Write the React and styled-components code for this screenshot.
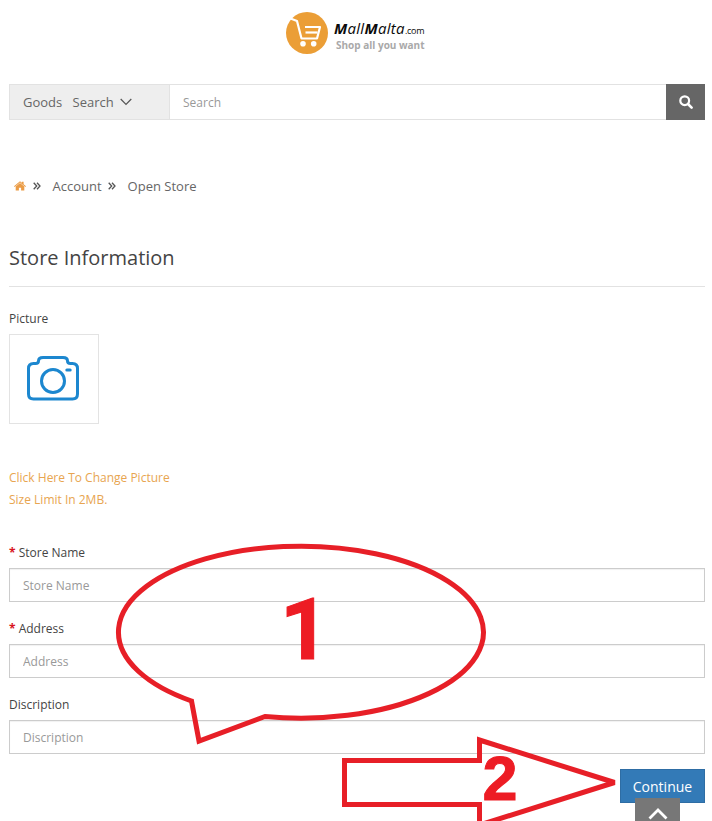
import React from 'react';
import styled, { createGlobalStyle } from 'styled-components';

const GlobalStyle = createGlobalStyle`
  *, *::before, *::after { box-sizing: border-box; }
  html, body { margin: 0; height: 100%; overflow: hidden; background: #fff; }
  body, input, button { font-family: "Open Sans", "Noto Sans", sans-serif; font-size: 13px; }
`;

const Page = styled.main`
  position: relative;
  width: 712px;
  height: 821px;
  overflow: hidden;
  padding: 12px 7px 0 9px;
  color: #444;
  background: #fff;
`;

const Brand = styled.header`
  display: flex;
  gap: 6px;
  height: 42px;
  padding-left: 277px;
`;

const BrandText = styled.div`
  padding-top: 7px;
`;

const BrandName = styled.div`
  display: flex;
  align-items: baseline;
  height: 19px;
  color: #0a0a0a;
  font-size: 15px;
  line-height: 18px;
  font-style: italic;
  letter-spacing: 0.3px;
  white-space: nowrap;

  b { font-weight: 700; }
`;

const BrandSuffix = styled.span`
  font-size: 9px;
  font-style: normal;
  letter-spacing: -0.25px;
`;

const Tagline = styled.div`
  padding-left: 2px;
  color: #a9a9a9;
  font-size: 10px;
  font-weight: 700;
  line-height: 15px;
  white-space: nowrap;
`;

const SearchBar = styled.form`
  display: flex;
  height: 36px;
  margin-top: 30px;
`;

const SearchScope = styled.button`
  display: flex;
  align-items: center;
  width: 161px;
  padding: 0 0 0 13px;
  border: 1px solid #e2e2e2;
  background: #eee;
  color: #666;
  font-size: 13px;
  word-spacing: 7px;

  svg { margin-left: 6px; }
`;

const SearchInput = styled.input`
  flex: 1;
  min-width: 0;
  padding: 0 13px;
  border: 1px solid #e2e2e2;
  border-width: 1px 0;
  outline: none;
  font-size: 12px;

  &::placeholder { color: #999; opacity: 1; }
`;

const SearchButton = styled.button`
  display: flex;
  align-items: center;
  justify-content: center;
  width: 39px;
  padding: 0;
  border: 0;
  background: #666;
`;

const Breadcrumb = styled.nav`
  display: flex;
  align-items: center;
  height: 20px;
  margin-top: 56px;
  padding-left: 5px;
  color: #666;
  font-size: 13px;

  svg { flex: none; }
`;

const Crumb = styled.span`
  margin: 0 6.5px 0 11.5px;
`;

const HomeLink = styled.a`
  display: flex;
  margin-right: 7px;
`;

const Title = styled.h1`
  height: 46px;
  margin: 45px 0 0;
  padding-top: 4px;
  border-bottom: 1px solid #e2e2e2;
  color: #444;
  font-size: 20px;
  font-weight: 400;
  line-height: 26px;
`;

const PictureLabel = styled.div`
  height: 18px;
  margin-top: 23px;
  font-size: 12px;
  line-height: 18px;
`;

const PictureBox = styled.div`
  display: flex;
  align-items: center;
  justify-content: center;
  width: 90px;
  height: 90px;
  margin-top: 6px;
  padding: 0 2px 2px 0;
  border: 1px solid #e3e3e3;
`;

const Hint = styled.p`
  height: 44px;
  margin: 43px 0 0;
  color: #e8a550;
  font-size: 12px;
  line-height: 22px;
`;

const Fields = styled.div`
  display: grid;
  grid-auto-rows: 76px;
  margin-top: 32px;
`;

const Field = styled.label`
  display: block;
`;

const FieldLabel = styled.span`
  display: block;
  height: 25px;
  font-size: 12px;
  line-height: 19px;
`;

const Required = styled.span`
  color: #d8141e;
  font-weight: 700;
`;

const FieldInput = styled.input`
  display: block;
  width: 100%;
  height: 34px;
  padding: 0 13px;
  border: 1px solid #ccc;
  outline: none;
  box-shadow: inset 0 1px 1px rgba(0, 0, 0, 0.06);
  font-size: 12px;

  &::placeholder { color: #999; opacity: 1; }
`;

const Actions = styled.div`
  display: flex;
  justify-content: flex-end;
  margin-top: -2px;
`;

const ContinueButton = styled.button`
  width: 85px;
  height: 34px;
  padding: 0;
  border: 1px solid #2e6da4;
  background: #337ab7;
  color: #fff;
  font-size: 14px;
`;

const BackToTop = styled.button`
  position: absolute;
  right: 32px;
  bottom: -16px;
  display: flex;
  justify-content: center;
  width: 45px;
  height: 39px;
  padding: 10px 0 0;
  border: 0;
  background: #777;
`;

const Annotations = styled.svg`
  position: absolute;
  inset: 0;
  pointer-events: none;
`;

const StepNumber = styled.text`
  fill: #ed1c24;
  stroke: #ed1c24;
  stroke-width: 1px;
  font-family: ${(p) => p.$family}, sans-serif;
  font-size: ${(p) => p.$size}px;
  font-weight: 700;
`;

const CartLogo = () => (
  <svg width="42" height="42" viewBox="0 0 42 42" fill="none">
    <circle cx="21" cy="21" r="21" fill="#eb9e36" />
    <path d="M4.5 6.5 L11 9 L15.5 26.5 H31 L34 15 H19" stroke="#fff" strokeWidth="2.2" strokeLinejoin="round" />
    <path d="M19.5 20.5 H31.5" stroke="#fff" strokeWidth="2.2" />
    <circle cx="17" cy="31.7" r="2.8" fill="#fff" />
    <circle cx="27.7" cy="31.7" r="2.8" fill="#fff" />
  </svg>
);

const DoubleAngle = () => (
  <svg width="8" height="8" viewBox="0 0 8 8" fill="none" stroke="#555" strokeWidth="1.3">
    <path d="M.7 .8 L3.7 4 L.7 7.2 M4 .8 L7 4 L4 7.2" />
  </svg>
);

const HomeIcon = () => (
  <svg width="12" height="10" viewBox="0 0 12 10" fill="#eb9c46">
    <path d="M6 .2 L7.9 1.8 V.7 H9.6 V3.2 L12 5.2 L11.3 6 L6 1.6 L.7 6 L0 5.2 Z" />
    <path d="M6 2 L10.3 5.6 V9.6 H7.1 V6.8 H4.9 V9.6 H1.7 V5.6 Z" />
  </svg>
);

const CameraIcon = () => (
  <svg width="52" height="46" viewBox="0 0 52 46" fill="none" stroke="#1c87cf" strokeWidth="3">
    <path d="M6.5 8.5 H8.5 Q11.5 8.5 11.5 6 Q11.5 2.5 16 2.5 H36 Q40.5 2.5 40.5 6 Q40.5 8.5 43.5 8.5 H45.5 Q50.5 8.5 50.5 13.5 V39 Q50.5 44 45.5 44 H6.5 Q1.5 44 1.5 39 V13.5 Q1.5 8.5 6.5 8.5 Z" />
    <circle cx="26" cy="26" r="11.5" />
    <path d="M39.8 15 H43.2" strokeLinecap="round" />
  </svg>
);

const FIELDS = [
  { label: 'Store Name', required: true },
  { label: 'Address', required: true },
  { label: 'Discription', required: false },
];

export default function App() {
  return (
    <>
      <GlobalStyle />
      <Page>
        <Brand>
          <CartLogo />
          <BrandText>
            <BrandName>
              <b>M</b>all<b>M</b>alta<BrandSuffix>.com</BrandSuffix>
            </BrandName>
            <Tagline>Shop all you want</Tagline>
          </BrandText>
        </Brand>

        <SearchBar>
          <SearchScope type="button">
            Goods Search
            <svg width="12" height="8" viewBox="0 0 12 8" fill="none" stroke="#555" strokeWidth="1.2">
              <path d="M.7 1 L6 6.5 L11.3 1" />
            </svg>
          </SearchScope>
          <SearchInput placeholder="Search" />
          <SearchButton type="button" aria-label="Search">
            <svg width="14" height="14" viewBox="0 0 14 14" fill="none" stroke="#fff">
              <circle cx="5.7" cy="5.7" r="4.4" strokeWidth="2.2" />
              <path d="M9 9 L12.6 12.6" strokeWidth="2.6" strokeLinecap="round" />
            </svg>
          </SearchButton>
        </SearchBar>

        <Breadcrumb>
          <HomeLink>
            <HomeIcon />
          </HomeLink>
          <DoubleAngle />
          <Crumb>Account</Crumb>
          <DoubleAngle />
          <Crumb>Open Store</Crumb>
        </Breadcrumb>

        <Title>Store Information</Title>

        <PictureLabel>Picture</PictureLabel>
        <PictureBox>
          <CameraIcon />
        </PictureBox>
        <Hint>
          Click Here To Change Picture
          <br />
          Size Limit In 2MB.
        </Hint>

        <Fields>
          {FIELDS.map(({ label, required }) => (
            <Field key={label}>
              <FieldLabel>
                {required && <Required>* </Required>}
                {label}
              </FieldLabel>
              <FieldInput placeholder={label} />
            </Field>
          ))}
        </Fields>

        <Actions>
          <ContinueButton type="button">Continue</ContinueButton>
        </Actions>

        <BackToTop type="button" aria-label="Back to top">
          <svg width="20" height="12" viewBox="0 0 20 12" fill="none" stroke="#fff" strokeWidth="2.8">
            <path d="M1.5 10.5 L10 2 L18.5 10.5" />
          </svg>
        </BackToTop>

        <Annotations
          width="712"
          height="821"
          viewBox="0 0 712 821"
          fill="none"
          stroke="#e71f27"
          strokeWidth="5"
          strokeMiterlimit="3"
        >
          <path d="M191.5 701 A182.5 86 0 1 1 265 716.5 L199 741 Z" />
          <path d="M344.5 760.5 H479.5 V740 L614.5 782.5 L479.5 825 V804.5 H344.5 Z" />
          <StepNumber x="280" y="658.5" $size={86} $family="Roboto">1</StepNumber>
          <StepNumber x="482.5" y="799.5" $size={63} $family={'"Liberation Sans"'}>2</StepNumber>
        </Annotations>
      </Page>
    </>
  );
}
